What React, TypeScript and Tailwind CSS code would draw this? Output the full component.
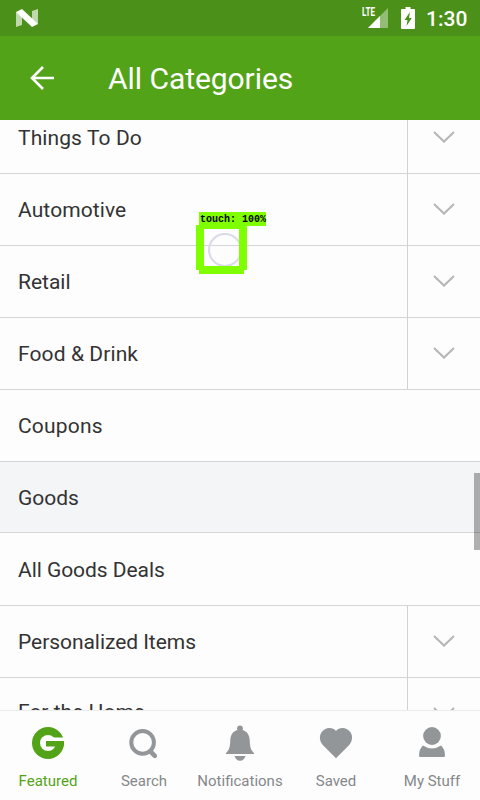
import type { ReactNode } from 'react';

type Row = { label: string; expandable?: boolean; className?: string; textClass?: string };

const rows: Row[] = [
  { label: 'Things To Do', expandable: true, textClass: 'tracking-[0.1px]' },
  { label: 'Automotive', expandable: true, textClass: 'tracking-[0.1px]' },
  { label: 'Retail', expandable: true },
  { label: 'Food & Drink', expandable: true, textClass: 'tracking-[0.1px]' },
  { label: 'Coupons', textClass: 'tracking-[0.2px]' },
  { label: 'Goods', className: 'h-[71px] bg-[#f4f5f7]', textClass: 'pt-[2px]' },
  { label: 'All Goods Deals', className: 'h-[73px]', textClass: 'pt-px tracking-[-0.05px]' },
  { label: 'Personalized Items', expandable: true, textClass: 'tracking-[-0.05px]' },
  { label: 'For the Home', expandable: true, textClass: 'pb-[3px]' },
];

function StatusBar() {
  return (
    <div className="flex h-9 shrink-0 items-center bg-[#4b9018] text-white">
      <svg className="ml-4 h-[18px] w-[22px]" viewBox="0 0 22 18">
        <path d="M0 3 6 5V16L0 18ZM22 0V15L16 12V2Z" fill="#fff" opacity=".65" />
        <path d="M0 3 6 0 22 15 16 18Z" fill="#fff" />
      </svg>
      <svg className="ml-auto h-[24px] w-[28px] overflow-visible" viewBox="0 0 28 24" fill="#fff">
        <path d="M27 2V22H7Z" opacity=".4" />
        <path d="M19 10V22H7Z" />
        <rect width="14.500" height="11" fill="#4b9018" />
        <text x="1" y="10" fontSize="12.5" fontWeight="700" fontFamily="Roboto, sans-serif" textLength="13" lengthAdjust="spacingAndGlyphs">LTE</text>
      </svg>
      <svg className="ml-[12px] h-[22px] w-[14px]" viewBox="0 0 14 22">
        <path d="M4.500 0H9.500V2H13Q14 2 14 3V21Q14 22 13 22H1Q0 22 0 21V3Q0 2 1 2H4.500Z" fill="#fff" />
        <path d="M9 5 3.500 13H6.500L5.500 19L10.800 11H8Z" fill="#4b9018" />
      </svg>
      <span className="ml-[11px] mr-[12px] w-[42px] whitespace-nowrap pt-[2px] text-[21px] font-medium leading-[24px]">1:30</span>
    </div>
  );
}

function CategoryRow({ label, expandable, className = 'h-[72px]', textClass = '' }: Row) {
  return (
    <div className={`flex shrink-0 border-b border-[#d5d6d8] ${className}`}>
      <span className={`flex flex-1 items-center pl-[18px] text-[21px] leading-6 text-[#333] ${textClass}`}>{label}</span>
      {expandable && (
        <span className="flex w-[73px] items-center justify-center border-l border-[#d0d1d2] pb-[2px]">
          <svg className="h-3 w-[22px]" viewBox="0 0 22 12" fill="none" stroke="#b5b5b5" strokeWidth="2">
            <path d="m1 1 10 9.500L21 1" />
          </svg>
        </span>
      )}
    </div>
  );
}

function TouchMarker() {
  return (
    <div className="absolute left-[196px] top-[212px] h-[62px] w-[70px]">
      <div className="absolute left-[12px] top-[21px] h-[34px] w-[34px] rounded-full border-2 border-[#d9d9e8]" />
      <div className="absolute left-[3px] top-0 h-[14px] w-[67px] bg-[#80ff00]" />
      <div className="absolute left-0 top-[13px] h-[4px] w-[51px] bg-[#80ff00]" />
      <div className="absolute left-0 top-[13px] h-[45px] w-[8px] bg-[#80ff00]" />
      <div className="absolute left-[43px] top-[13px] h-[45px] w-[8px] bg-[#80ff00]" />
      <div className="absolute left-[3px] top-[54px] h-[8px] w-[45px] bg-[#80ff00]" />
      <span className="absolute left-[4px] top-[2px] whitespace-pre font-['Liberation_Mono',monospace] text-[10px] font-bold leading-[12px] text-black">touch: 100%</span>
    </div>
  );
}

function NavItem({ label, active, children }: { label: string; active?: boolean; children: ReactNode }) {
  return (
    <div className={`flex w-24 flex-col items-center pt-[11px] ${active ? 'text-[#53a318]' : 'text-[#929699]'}`}>
      <svg className="h-10 w-10" viewBox="0 0 40 40" fill="currentColor">{children}</svg>
      <span className={`mt-[10px] whitespace-nowrap text-[15px] leading-[18px] ${active ? '' : 'text-[#85888a]'}`}>{label}</span>
    </div>
  );
}

export default function App() {
  return (
    <div className="relative flex h-[800px] w-[480px] flex-col overflow-hidden bg-[#fdfdfd] font-[Roboto,sans-serif]">
      <StatusBar />
      <header className="flex h-[84px] shrink-0 items-center bg-[#53a318] text-white">
        <svg className="ml-[30px] h-6 w-6" viewBox="0 0 24 24" fill="none" stroke="currentColor" strokeWidth="2.600">
          <path d="M24 12H2M13 1 2 12l11 11" />
        </svg>
        <h1 className="ml-[54px] pt-[2px] text-[30px] leading-9 tracking-[-0.05px]">All Categories</h1>
      </header>
      <main className="min-h-0 flex-1 overflow-hidden">
        <div className="-mt-[18px] flex flex-col">
          {rows.map((row) => <CategoryRow key={row.label} {...row} />)}
        </div>
      </main>
      <nav className="flex h-[90px] shrink-0 border-t border-[#ebebeb] bg-[#fdfdfd]">
        <NavItem label="Featured" active>
          <circle cx="20" cy="21" r="16" />
          <circle cx="20" cy="21" r="8" fill="#fdfdfd" />
          <path d="M22 15.500H37V19H22Z" fill="#fdfdfd" />
          <path d="M18 19H35.900Q36.200 22 35.500 24.500H18Z" />
        </NavItem>
        <NavItem label="Search">
          <circle cx="18.600" cy="20.400" r="11.300" fill="none" stroke="currentColor" strokeWidth="4" />
          <path d="m26.500 29.500 4.300 4.300" stroke="currentColor" strokeWidth="4.600" strokeLinecap="round" />
        </NavItem>
        <NavItem label="Notifications">
          <circle cx="20" cy="6.300" r="2.900" />
          <path d="M20 7.800C26 7.800 29.300 12 29.700 18C30 25 30.500 27.500 34 31.200V32H6V31.200C9.500 27.500 10 25 10.300 18C10.700 12 14 7.800 20 7.800Z" />
          <path d="M14.500 34H25.500Q24 38.800 20 38.800T14.500 34Z" />
        </NavItem>
        <NavItem label="Saved">
          <path d="M20 36.300 6.800 23C2.500 18 3 10.800 8.500 7.500C12.500 5.300 17 5.700 20 8.900C23 5.700 27.500 5.300 31.500 7.500C37 10.800 37.500 18 33.200 23Z" />
        </NavItem>
        <NavItem label="My Stuff">
          <circle cx="20" cy="14" r="8.900" />
          <path d="M11 23.500Q20 29.500 29 23.500Q33 27 33 33.500Q33 35 31.500 35H8.500Q7 35 7 33.500Q7 27 11 23.500Z" />
        </NavItem>
      </nav>
      <div className="absolute left-[474px] top-[473px] h-[77px] w-[6px] bg-black/30" />
      <TouchMarker />
    </div>
  );
}
